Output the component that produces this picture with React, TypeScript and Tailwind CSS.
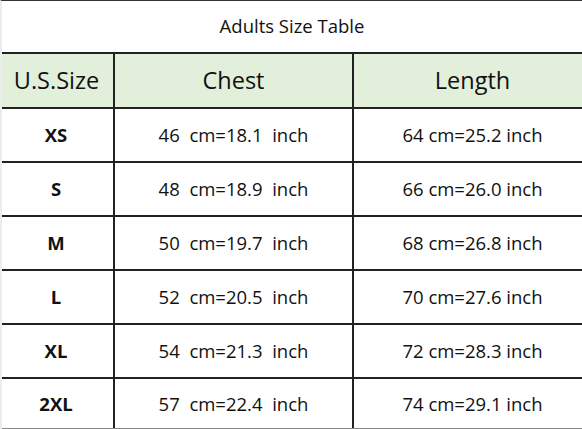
import React from "react";

const rows = [
  ["XS", "46  cm=18.1  inch", "64 cm=25.2 inch"],
  ["S", "48  cm=18.9  inch", "66 cm=26.0 inch"],
  ["M", "50  cm=19.7  inch", "68 cm=26.8 inch"],
  ["L", "52  cm=20.5  inch", "70 cm=27.6 inch"],
  ["XL", "54  cm=21.3  inch", "72 cm=28.3 inch"],
  ["2XL", "57  cm=22.4  inch", "74 cm=29.1 inch"],
];

export default function App() {
  return (
    <div
      className="w-[582px] h-[429px] bg-white flex flex-col overflow-hidden text-[#111]"
      style={{ fontFamily: '"Open Sans", "Noto Sans", sans-serif' }}
    >
      <div className="h-[52px] shrink-0 border-t border-[#333] border-l-2 border-l-[#ececec] flex items-center justify-center text-[18.5px] pb-[2px]">
        Adults Size Table
      </div>
      <div className="flex-1 flex flex-col border-l-2 border-l-[#ececec]">
        <div className="h-[55px] shrink-0 grid grid-cols-[111px_239px_1fr] border-t-2 border-[#222] bg-[#e2efda]">
          <div className="flex items-center justify-center text-[23.5px] pr-[2px]">U.S.Size</div>
          <div className="flex items-center justify-center text-[23.5px] border-l-2 border-[#222]">Chest</div>
          <div className="flex items-center justify-center text-[23.5px] border-l-2 border-[#222] pl-[9px]">Length</div>
        </div>
        {rows.map((r, i) => (
          <div
            key={r[0]}
            className={`grid grid-cols-[111px_239px_1fr] border-t-2 border-[#222] ${
              i === rows.length - 1 ? "flex-1 border-b border-b-[#888]" : "h-[54px] shrink-0"
            }`}
          >
            <div className="flex items-center justify-center text-[18.5px] font-bold pr-[3px]">{r[0]}</div>
            <div className="flex items-center justify-center text-[18.5px] border-l-2 border-[#222] whitespace-pre">
              {r[1]}
            </div>
            <div className="flex items-center justify-center text-[18.5px] border-l-2 border-[#222] whitespace-pre pl-[9px]">
              {r[2]}
            </div>
          </div>
        ))}
      </div>
    </div>
  );
}
